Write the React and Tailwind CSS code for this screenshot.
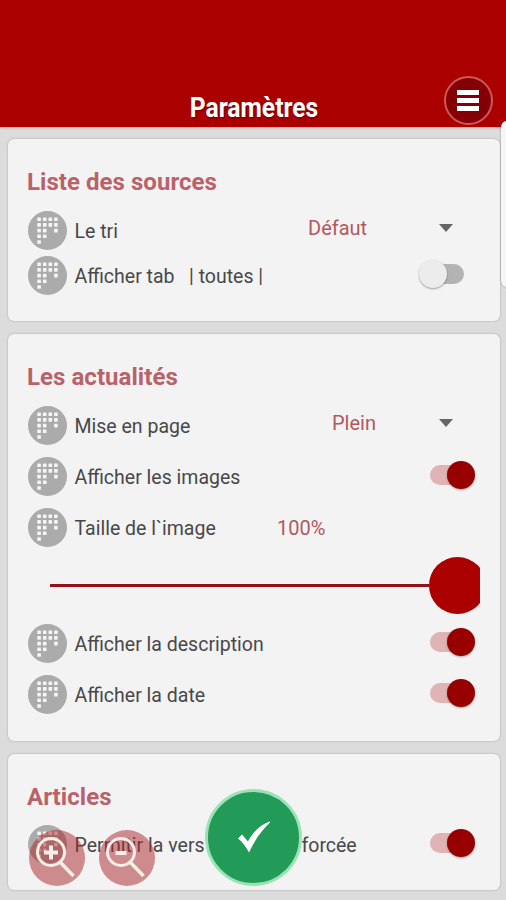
import clsx from "clsx";

const dots = [
  [0, 0], [1, 0], [2, 0], [3, 0],
  [0, 1], [1, 1], [2, 1], [3, 1],
  [0, 2], [1, 2], [3, 2],
  [0, 3], [1, 3],
  [0, 4],
];

const DotIcon = () => (
  <svg viewBox="0 0 39 39" className="w-[39px] h-[39px] shrink-0">
    <circle cx="19.5" cy="19.5" r="19.5" fill="#ababab" />
    {dots.map(([x, y]) => (
      <rect
        key={`${x}-${y}`}
        x={9.3 + x * 5.6}
        y={6.4 + y * 5.7}
        width="3.6"
        height="3.6"
        rx="0.6"
        fill="#f6f6f6"
      />
    ))}
  </svg>
);

const Switch = ({ on }) => (
  <div className={clsx("flex items-center shrink-0 -mt-[3px]", !on && "mr-[11px]")}>
    {on ? (
      <>
        <div className="w-[31px] h-[20px] -mr-[14px] rounded-full bg-[#e0b3b4]" />
        <div className="w-[28px] h-[28px] rounded-full bg-[#980000] shadow-[0_1px_2px_rgba(0,0,0,0.3)]" />
      </>
    ) : (
      <>
        <div className="relative z-10 w-[28px] h-[28px] rounded-full bg-[#ececec] shadow-[0_1px_2px_rgba(0,0,0,0.35)]" />
        <div className="w-[31px] h-[20px] -ml-[14px] rounded-full bg-[#b3b3b3]" />
      </>
    )}
  </div>
);

const Select = ({ value, className }) => (
  <div className={clsx("flex items-center justify-between shrink-0 mr-[22px] mb-[5px]", className)}>
    <span className="text-[20px] text-[#b2585e]">{value}</span>
    <svg viewBox="0 0 14 8" className="w-[14px] h-[8px]">
      <path d="M0 0h14L7 8z" fill="#666" />
    </svg>
  </div>
);

const Row = ({ label, className = "h-[51px]", children }) => (
  <div className={clsx("flex items-center text-[19.5px] text-[#484848]", className)}>
    <DotIcon />
    <div className="ml-[7.5px] flex-1 whitespace-pre pt-[3px]">{label}</div>
    {children}
  </div>
);

const Card = ({ title, className, children }) => (
  <section
    className={clsx(
      "rounded-md bg-[#f3f3f3] pl-5 pr-[25px] pt-[27px] shadow-[0_0_2px_rgba(0,0,0,0.3)]",
      className
    )}
  >
    <h2 className="-ml-px h-8 leading-8 text-[24px] tracking-[0.05px] font-bold text-[#b9626a]">{title}</h2>
    {children}
  </section>
);

const ZoomButton = ({ plus }) => (
  <button className="w-14 h-14 rounded-full bg-[#aa2428]/50">
    <svg viewBox="0 0 56 56" className="w-14 h-14" fill="none" stroke="#f8eeea" strokeWidth="3">
      <circle cx="22" cy="22" r="13.5" />
      <path d="M31 32L44.500 46" strokeWidth="3.4" />
      <path d={plus ? "M15 22.500h14M22 15.500v14" : "M16.500 23h11"} strokeWidth="4" />
    </svg>
  </button>
);

const App = () => {
  return (
    <div className="relative h-[900px] w-[506px] overflow-hidden bg-[#dcdcdc] font-['Roboto',sans-serif]">
      {/* Header */}
      <header className="flex h-[127px] items-end justify-between bg-[#ab0000] pl-[15px] pr-[13px] shadow-[0_1px_2px_rgba(0,0,0,0.25)]">
        <div className="w-[49px]" />
        <h1 className="mb-px text-[28px] leading-[36px] font-bold text-white scale-x-[0.88] [text-shadow:1px_1px_2px_rgba(0,0,0,0.35)]">
          Paramètres
        </h1>
        <button className="mb-[2px] flex h-[49px] w-[49px] flex-col items-center justify-center gap-[3px] rounded-full border-2 border-[#cd5956] bg-[#850006]">
          <span className="h-[5px] w-[22px] bg-white" />
          <span className="h-[5px] w-[22px] bg-white" />
          <span className="h-[5px] w-[22px] bg-white" />
        </button>
      </header>

      {/* Settings */}
      <main className="flex flex-col gap-[13px] pl-[8px] pr-[6px] pt-[12px]">
        <Card title="Liste des sources" className="h-[182px]">
          <div className="mt-[9px]">
            <Row label="Le tri" className="h-[46px]">
              <Select value="Défaut" className="w-[145px]" />
            </Row>
            <Row label="Afficher tab   | toutes |" className="h-[45px]">
              <Switch />
            </Row>
          </div>
        </Card>

        <Card title="Les actualités" className="h-[407px]">
          <div className="mt-[7px]">
            <Row label="Mise en page">
              <Select value="Plein" className="w-[121px]" />
            </Row>
            <Row label="Afficher les images">
              <Switch on />
            </Row>
            <Row label="Taille de l`image">
              <span className="w-[198px] text-[20px] text-[#b2585e]">100%</span>
            </Row>
            <div className="-mr-[5px] flex h-[65px] items-center overflow-hidden pl-[22px]">
              <div className="h-[3px] flex-1 bg-[#941216]" />
              <div className="-mr-[6px] h-[57px] w-[57px] rounded-full bg-[#ab0000]" />
            </div>
            <Row label="Afficher la description">
              <Switch on />
            </Row>
            <Row label="Afficher la date">
              <Switch on />
            </Row>
          </div>
        </Card>

        <Card title="Articles" className="h-[136px]">
          <div className="mt-[6px]">
            <Row
              label={
                <div className="flex">
                  <span className="w-[227px]">Permitir la vers</span>
                  <span>forcée</span>
                </div>
              }
            >
              <Switch on />
            </Row>
          </div>
        </Card>
      </main>

      {/* Edge panel handle */}
      <div className="absolute left-[501px] top-[121px] h-[166px] w-[12px] rounded-md bg-[#f6f6f6] shadow-[0_0_2px_rgba(0,0,0,0.4)]" />

      {/* Floating buttons */}
      <div className="absolute left-[29px] top-[830px] flex gap-[14px]">
        <ZoomButton plus />
        <ZoomButton />
      </div>
      <button className="absolute left-[205px] top-[789px] flex h-[97px] w-[97px] items-center justify-center rounded-full border-[3px] border-[#9be3b5] bg-[#239b58]">
        <svg viewBox="0 0 34 32" className="mb-[2px] h-[32px] w-[34px]">
          <path d="M1 17.500L5 13.500L11 20.500C16 11 23 4 32.500 0.500L33 1.500C26 8 18 18 12 31.500Q7 22 1 17.500z" fill="#fff" />
        </svg>
      </button>
    </div>
  );
};

export default App;
